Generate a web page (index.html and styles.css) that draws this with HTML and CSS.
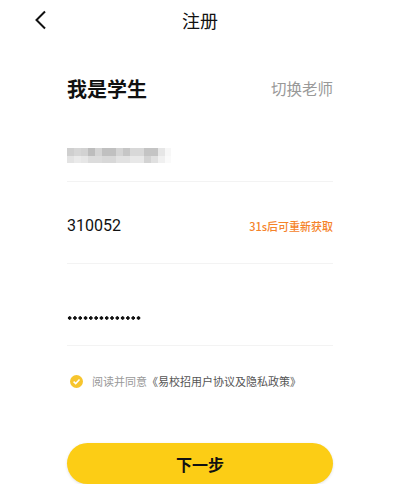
FILE: index.html
```html
<!DOCTYPE html>
<html lang="zh">
<head>
    <meta charset="UTF-8">
    <meta name="viewport" content="width=device-width, initial-scale=1.0">
    <title>注册</title>
    <link rel="stylesheet" href="styles.css">
</head>
<body>
    <div class="header">
        <div class="back">
            <svg width="14" height="20" viewBox="0 0 14 20"><path d="M11 1.5 L2.5 10 L11 18.5" fill="none" stroke="#111" stroke-width="2"/></svg>
        </div>
        <div class="title">注册</div>
        <div></div>
    </div>

    <div class="container">
        <div class="role">
            <span class="role-name">我是学生</span>
            <span class="role-switch">切换老师</span>
        </div>

        <div class="field field-phone">
            <div class="blur"></div>
        </div>

        <div class="field field-code">
            <span class="value">310052</span>
            <span class="resend">31s后可重新获取</span>
        </div>

        <div class="field field-pwd">
            <span class="dots" title="密码"></span>
        </div>

        <div class="agree">
            <svg class="check" width="13" height="13" viewBox="0 0 13 13"><circle cx="6.5" cy="6.5" r="6.5" fill="#f7c52d"/><path d="M3.6 6.6 L5.7 8.6 L9.5 4.6" fill="none" stroke="#fff" stroke-width="1.5"/></svg>
            <span class="agree-text">阅读并同意</span><span class="agree-link">《易校招用户协议及隐私政策》</span>
        </div>

        <button class="next">下一步</button>
    </div>
</body>
</html>
```

FILE: styles.css
```css
body {
    margin: 0;
    background: #fff;
    color: #111;
    font-family: "Noto Sans CJK SC", "Noto Sans", sans-serif;
}
.header {
    display: grid;
    grid-template-columns: 1fr auto 1fr;
    align-items: center;
    height: 40px;
}
.back {
    padding-left: 34px;
    height: 20px;
}
.title {
    font-size: 18px;
    line-height: 22px;
}
.container {
    padding: 0 67px;
}
.role {
    display: flex;
    justify-content: space-between;
    align-items: center;
    height: 34px;
    margin-top: 31px;
}
.role-name {
    font-size: 20px;
    font-weight: bold;
}
.role-switch {
    font-size: 15.5px;
    color: #999;
}
.field {
    display: flex;
    justify-content: space-between;
    border-bottom: 1px solid #f3f3f3;
    box-sizing: border-box;
}
.field-phone {
    height: 77px;
    align-items: flex-end;
}
.blur {
    width: 104px;
    height: 15px;
    margin-bottom: 18px;
    background:
        linear-gradient(to right, #cfcfcf 0 7px, #d6d6d6 7px 14px, #d2d2d2 14px 21px, #bdbdbd 21px 28px, #d4d4d4 28px 35px, #c0c0c0 35px 49px, #d4d4d4 49px 56px, #c6c6c6 56px 63px, #d8d8d8 63px 77px, #c4c4c4 77px 91px, #e6e6e6 91px 98px, #f7f7f7 98px) top / 100% 8px no-repeat,
        linear-gradient(to right, #e3e3e3 0 7px, #eaeaea 7px 14px, #e6e6e6 14px 21px, #dcdcdc 21px 35px, #d8d8d8 35px 49px, #e2e2e2 49px 63px, #e8e8e8 63px 77px, #d3d3d3 77px 84px, #e0e0e0 84px 91px, #f0f0f0 91px 98px, #fafafa 98px) bottom / 100% 7px no-repeat;
}
.field-code {
    height: 82px;
    align-items: flex-end;
    padding-bottom: 26px;
}
.value {
    font-family: Roboto, sans-serif;
    font-size: 16px;
    line-height: 22px;
}
.resend {
    font-size: 11px;
    font-weight: 500;
    line-height: 22px;
    color: #f5832a;
}
.field-pwd {
    height: 82px;
    align-items: flex-end;
    padding-bottom: 25px;
}
.dots {
    display: block;
    width: 74px;
    height: 4px;
    background: radial-gradient(circle, #111 1.5px, transparent 2px) 0 0 / 5.3px 4px repeat-x;
}
.agree {
    display: flex;
    align-items: center;
    height: 22px;
    margin-top: 24px;
    padding-left: 3px;
    font-size: 11px;
}
.check {
    margin-right: 9px;
}
.agree-text {
    color: #999;
}
.agree-link {
    color: #555;
}
.next {
    display: block;
    width: 100%;
    height: 41px;
    margin-top: 51px;
    border: none;
    border-radius: 21px;
    background: #fccd15;
    color: #111;
    font-family: "Noto Sans CJK SC", sans-serif;
    font-size: 16px;
    font-weight: bold;
    box-shadow: 0 1px 3px rgba(0, 0, 0, 0.12);
}
```
